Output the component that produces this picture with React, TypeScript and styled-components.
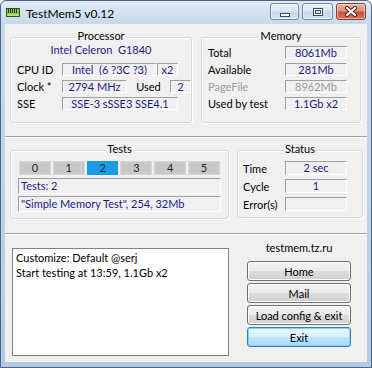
import React from "react";
import styled, { createGlobalStyle } from "styled-components";

const FONT = `Lato, "Open Sans", "Noto Sans", sans-serif`;

const GlobalStyle = createGlobalStyle`
  html, body { margin: 0; padding: 0; background: #ffffff; }
  body { font-family: ${FONT}; }
  * { box-sizing: border-box; }
`;

const Window = styled.div`
  width: 372px;
  height: 368px;
  display: flex;
  flex-direction: column;
  border: 1px solid #4d6581;
  border-radius: 6px 6px 0 0;
  background: linear-gradient(180deg, #dfeaf6 0px, #c8d9ec 22px, #bed2e8 60%, #b2c9e3 100%);
  font-family: ${FONT};
  font-size: 11px;
  color: #000;
  overflow: hidden;
`;

const TitleBar = styled.div`
  height: 23px;
  flex: none;
  display: flex;
  align-items: flex-start;
  padding: 0 5px;
`;

const AppIcon = styled.svg`
  margin-top: 7px;
  flex: none;
`;

const Title = styled.div`
  flex: 1;
  margin: 5px 0 0 6px;
  font-size: 12px;
  line-height: 16px;
`;

const CaptionButtons = styled.div`
  display: flex;
  gap: 3px;
  margin-top: 2px;
`;

const CaptionButton = styled.div<{ $w: number; $close?: boolean }>`
  width: ${(p) => p.$w}px;
  height: 17px;
  display: flex;
  align-items: center;
  justify-content: center;
  border: 1px solid ${(p) => (p.$close ? "#8b3a2e" : "#6e88a8")};
  border-radius: 3px;
  background: ${(p) =>
    p.$close
      ? "linear-gradient(180deg, #eeb5a7 0%, #dd8c79 45%, #c9513a 55%, #d8704f 100%)"
      : "linear-gradient(180deg, #eef4fb 0%, #d9e5f2 45%, #c5d7eb 55%, #d3e2f2 100%)"};
  box-shadow: inset 0 0 0 1px rgba(255, 255, 255, 0.5);
`;

const Client = styled.div`
  flex: 1;
  min-height: 0;
  margin: 0 4px 5px 4px;
  background: #f0f0f0;
  display: flex;
  flex-direction: column;
`;

const TopPanel = styled.div`
  height: 113px;
  flex: none;
  display: flex;
  align-items: flex-start;
  gap: 9px;
  padding: 5px 0 0 5px;
  border-bottom: 1px solid #a0a0a0;
`;

const MiddlePanel = styled.div`
  height: 97px;
  flex: none;
  display: flex;
  align-items: flex-start;
  gap: 8px;
  padding: 4px 0 0 5px;
  border-top: 1px solid #ffffff;
  border-bottom: 1px solid #a0a0a0;
`;

const BottomPanel = styled.div`
  flex: 1;
  display: flex;
  align-items: flex-start;
  padding: 0 0 0 7px;
  border-top: 1px solid #ffffff;
`;

const Group = styled.fieldset<{ $w: number }>`
  width: ${(p) => p.$w}px;
  min-width: 0;
  margin: 0;
  padding: 0;
  border: 1px solid #d5d9de;
  border-radius: 3px;
  box-shadow: inset 1px 1px 0 #ffffff, 1px 1px 0 #ffffff;
`;

const Legend = styled.legend`
  margin: 0 auto;
  padding: 0 2px 2px;
  line-height: 14px;
  background: #f0f0f0;
  color: #000;
`;

const Rows = styled.div<{ $pl: number; $pt: number; $pb: number }>`
  display: flex;
  flex-direction: column;
  gap: 4px;
  padding: ${(p) => p.$pt}px 0 ${(p) => p.$pb}px ${(p) => p.$pl}px;
`;

const Row = styled.div<{ $h?: number }>`
  display: flex;
  align-items: center;
  height: ${(p) => p.$h ?? 13}px;
`;

const CpuName = styled.div`
  height: 13px;
  margin-top: -3px;
  margin-bottom: 3px;
  line-height: 14px;
  text-align: center;
  color: #1c1c86;
  white-space: pre;
  padding-right: 6px;
`;

const Label = styled.span<{ $w?: number; $disabled?: boolean; $center?: boolean }>`
  flex: ${(p) => (p.$w ? "none" : "1")};
  width: ${(p) => (p.$w ? `${p.$w}px` : "auto")};
  line-height: 13px;
  white-space: pre;
  text-align: ${(p) => (p.$center ? "center" : "left")};
  color: ${(p) => (p.$disabled ? "#9a9a9a" : "#000")};
`;

const Field = styled.div<{ $w: number; $h?: number; $disabled?: boolean; $left?: boolean }>`
  flex: none;
  width: ${(p) => p.$w}px;
  height: ${(p) => p.$h ?? 13}px;
  border: 1px solid;
  border-color: #a0a0a0 #ffffff #ffffff #a0a0a0;
  color: ${(p) => (p.$disabled ? "#9a9a9a" : "#1c1c86")};
  text-align: ${(p) => (p.$left ? "left" : "center")};
  padding: ${(p) => (p.$left ? "0 0 0 2px" : "0")};
  line-height: ${(p) => (p.$h ?? 13) - 2}px;
  white-space: pre;
  overflow: hidden;
`;

const TestsBody = styled.div`
  display: flex;
  flex-direction: column;
  padding: 3px 7px 6px 7px;
`;

const TabRow = styled.div`
  display: flex;
  gap: 2px;
  height: 14px;
  margin: 0 1px 3px;
`;

const Tab = styled.div<{ $active?: boolean }>`
  flex: 1;
  background: ${(p) => (p.$active ? "#1b9be6" : "#c8c8c8")};
  border: 1px solid ${(p) => (p.$active ? "#1b9be6" : "#d6d6d6")};
  text-align: center;
  line-height: 12px;
  color: #222;
`;

const InfoStack = styled.div`
  display: flex;
  flex-direction: column;
  gap: 2px;
`;

const Memo = styled.div`
  flex: none;
  width: 217px;
  height: 108px;
  margin-top: 13px;
  background: #ffffff;
  border: 1px solid #828282;
  padding: 1px 3px;
  line-height: 15px;
  color: #000;
  white-space: pre;
`;

const SideColumn = styled.div`
  flex: none;
  width: 124px;
  margin-left: 8px;
  display: flex;
  flex-direction: column;
  align-items: center;
`;

const SiteLabel = styled.div`
  margin-top: 6px;
  line-height: 14px;
  color: #000;
`;

const ButtonStack = styled.div`
  margin-top: 6px;
  display: flex;
  flex-direction: column;
  gap: 2px;
`;

const Button = styled.button<{ $default?: boolean }>`
  width: 104px;
  height: 20px;
  padding: 0;
  font-family: ${FONT};
  font-size: 11px;
  color: #000;
  border-radius: 3px;
  border: 1px solid ${(p) => (p.$default ? "#3c7fb1" : "#707070")};
  background: ${(p) =>
    p.$default
      ? "linear-gradient(180deg, #eaf6fd 0%, #d9f0fc 50%, #bee6fd 50%, #a7d9f5 100%)"
      : "linear-gradient(180deg, #f2f2f2 0%, #ebebeb 50%, #dddddd 50%, #cfcfcf 100%)"};
  box-shadow: ${(p) =>
    p.$default ? "inset 0 0 0 1px #7fd2f7" : "inset 0 0 0 1px #fcfcfc"};
  cursor: default;
`;

const RamIcon = () => (
  <AppIcon width="14" height="9" viewBox="0 0 14 9">
    <rect x="0.5" y="0.5" width="13" height="8" fill="#86c94a" stroke="#2e5418" />
    {[2, 4, 6, 8, 10].map((x) => (
      <rect key={x} x={x} y="1" width="1" height="4" fill="#23401a" />
    ))}
    <rect x="1" y="6" width="12" height="2" fill="#b8e070" />
  </AppIcon>
);

const MinGlyph = () => (
  <svg width="12" height="12" viewBox="0 0 12 12">
    <rect x="1.5" y="7.5" width="9" height="3" fill="#ffffff" stroke="#3a4c66" />
  </svg>
);

const MaxGlyph = () => (
  <svg width="12" height="10" viewBox="0 0 12 10">
    <rect x="1.5" y="1.5" width="9" height="7" fill="#ffffff" stroke="#3a4c66" />
    <rect x="3.5" y="3.5" width="5" height="3" fill="#d9e4f1" stroke="#3a4c66" />
  </svg>
);

const CloseGlyph = () => (
  <svg width="14" height="11" viewBox="0 0 14 11">
    <path d="M3 2 L11 9 M11 2 L3 9" stroke="#5a1d14" strokeWidth="4" strokeLinecap="round" />
    <path d="M3 2 L11 9 M11 2 L3 9" stroke="#ffffff" strokeWidth="2.2" strokeLinecap="round" />
  </svg>
);

const tabs = ["0", "1", "2", "3", "4", "5"];

export default function App() {
  return (
    <>
      <GlobalStyle />
      <Window>
        <TitleBar>
          <RamIcon />
          <Title>TestMem5 v0.12</Title>
          <CaptionButtons>
            <CaptionButton $w={29}>
              <MinGlyph />
            </CaptionButton>
            <CaptionButton $w={31}>
              <MaxGlyph />
            </CaptionButton>
            <CaptionButton $w={30} $close>
              <CloseGlyph />
            </CaptionButton>
          </CaptionButtons>
        </TitleBar>
        <Client>
          <TopPanel>
            <Group $w={182}>
              <Legend>Processor</Legend>
              <Rows $pl={6} $pt={1} $pb={12}>
                <CpuName>{"Intel Celeron  G1840"}</CpuName>
                <Row>
                  <Label $w={45}>CPU ID</Label>
                  <Field $w={95}>{"Intel  (6 ?3C ?3)"}</Field>
                  <Field $w={21}>x2</Field>
                </Row>
                <Row>
                  <Label $w={45}>Clock *</Label>
                  <Field $w={65}>2794 MHz</Field>
                  <Label $center>Used</Label>
                  <Field $w={21}>2</Field>
                </Row>
                <Row>
                  <Label $w={45}>SSE</Label>
                  <Field $w={116}>SSE-3 sSSE3 SSE4.1</Field>
                </Row>
              </Rows>
            </Group>
            <Group $w={160}>
              <Legend>Memory</Legend>
              <Rows $pl={6} $pt={1} $pb={12}>
                <Row>
                  <Label $w={77}>Total</Label>
                  <Field $w={62}>8061Mb</Field>
                </Row>
                <Row>
                  <Label $w={77}>Available</Label>
                  <Field $w={62}>281Mb</Field>
                </Row>
                <Row>
                  <Label $w={77} $disabled>PageFile</Label>
                  <Field $w={62} $disabled>8962Mb</Field>
                </Row>
                <Row>
                  <Label $w={77}>Used by test</Label>
                  <Field $w={62}>1.1Gb x2</Field>
                </Row>
              </Rows>
            </Group>
          </TopPanel>
          <MiddlePanel>
            <Group $w={219}>
              <Legend>Tests</Legend>
              <TestsBody>
                <TabRow>
                  {tabs.map((t) => (
                    <Tab key={t} $active={t === "2"}>
                      {t}
                    </Tab>
                  ))}
                </TabRow>
                <InfoStack>
                  <Field $w={203} $h={16} $left>
                    Tests: 2
                  </Field>
                  <Field $w={203} $h={16} $left>
                    {'"Simple Memory Test", 254, 32Mb'}
                  </Field>
                </InfoStack>
              </TestsBody>
            </Group>
            <Group $w={126}>
              <Legend>Status</Legend>
              <Rows $pl={5} $pt={3} $pb={6}>
                <Row $h={14}>
                  <Label $w={42}>Time</Label>
                  <Field $w={62} $h={14}>2 sec</Field>
                </Row>
                <Row $h={14}>
                  <Label $w={42}>Cycle</Label>
                  <Field $w={62} $h={14}>1</Field>
                </Row>
                <Row $h={14}>
                  <Label $w={42}>Error(s)</Label>
                  <Field $w={62} $h={14}></Field>
                </Row>
              </Rows>
            </Group>
          </MiddlePanel>
          <BottomPanel>
            <Memo>{"Customize: Default @serj\nStart testing at 13:59, 1.1Gb x2"}</Memo>
            <SideColumn>
              <SiteLabel>testmem.tz.ru</SiteLabel>
              <ButtonStack>
                <Button>Home</Button>
                <Button>Mail</Button>
                <Button>Load config &amp; exit</Button>
                <Button $default>Exit</Button>
              </ButtonStack>
            </SideColumn>
          </BottomPanel>
        </Client>
      </Window>
    </>
  );
}
